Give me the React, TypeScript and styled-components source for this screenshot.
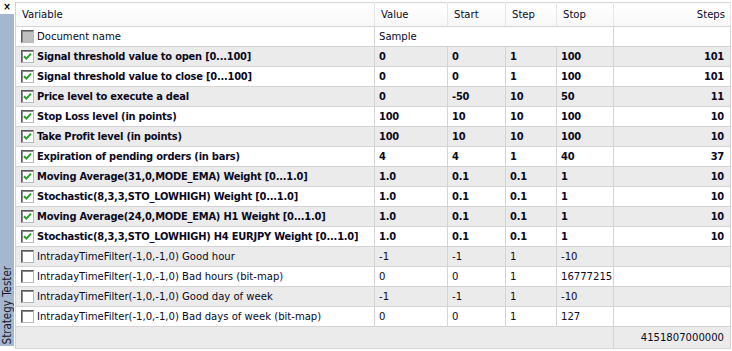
import React from 'react';
import styled, { createGlobalStyle } from 'styled-components';

const GlobalStyle = createGlobalStyle`
  html, body {
    margin: 0;
    padding: 0;
    background: #ffffff;
  }
  body {
    font-family: 'DejaVu Sans Condensed', 'DejaVu Sans', sans-serif;
    font-stretch: condensed;
    font-size: 11.2px;
    color: #000000;
  }
`;

const Colors = {
  SIDEBAR: '#a4b7cf',
  GRID: '#d4d4d4',
  ROW_ALT: '#ebebeb',
  TEXT: '#0a0a1e',
  CHECK: '#21a321',
};

const Frame = styled.div`
  display: flex;
  width: 732px;
  height: 351px;
  overflow: hidden;
  background: #ffffff;
`;

const SideBar = styled.div`
  display: flex;
  flex-direction: column;
  width: 14px;
  padding-bottom: 5px;
`;

const CloseBox = styled.div`
  height: 14px;
  display: flex;
  align-items: center;
  justify-content: center;
  font-weight: bold;
  font-size: 10px;
  line-height: 1;
  color: #000;
`;

const SideStrip = styled.div`
  flex: 1;
  background: ${Colors.SIDEBAR};
  display: flex;
  align-items: flex-end;
  justify-content: center;
`;

const SideLabel = styled.span`
  writing-mode: vertical-rl;
  transform: rotate(180deg);
  font-size: 11.5px;
  color: #1a1a2a;
  padding-top: 2px;
  white-space: nowrap;
`;

const Panel = styled.div`
  margin-left: 1px;
  padding-top: 2px;
  width: 715px;
`;

const Grid = styled.table`
  border-collapse: collapse;
  table-layout: fixed;
  width: 715px;
  border-top: 1px solid ${Colors.GRID};
  border-left: 1px solid ${Colors.GRID};
`;

const HeadCell = styled.th<{ $right?: boolean }>`
  height: 23px;
  padding: 0 ${(p) => (p.$right ? '5px' : '0')} 0 6px;
  text-align: ${(p) => (p.$right ? 'right' : 'left')};
  font-weight: normal;
  color: ${Colors.TEXT};
  border-bottom: 1px solid ${Colors.GRID};
  border-right: 1px solid #e6e6e6;
  background: linear-gradient(#ffffff, #f7f7f7);
  white-space: nowrap;
`;

const Row = styled.tr<{ $alt?: boolean }>`
  background: ${(p) => (p.$alt ? Colors.ROW_ALT : '#ffffff')};
`;

const Cell = styled.td<{ $bold?: boolean; $right?: boolean }>`
  height: 19px;
  padding: 0 ${(p) => (p.$right ? '6px' : '0')} 0 4px;
  text-align: ${(p) => (p.$right ? 'right' : 'left')};
  font-weight: ${(p) => (p.$bold ? 'bold' : 'normal')};
  font-size: ${(p) => (p.$bold ? '11px' : '11.2px')};
  letter-spacing: ${(p) => (p.$bold ? '-0.22px' : '0')};
  color: ${Colors.TEXT};
  border-bottom: 1px solid ${Colors.GRID};
  border-right: 1px solid ${Colors.GRID};
  white-space: nowrap;
  overflow: hidden;
`;

const NameCell = styled(Cell)`
  padding-left: 5px;
`;

const NameWrap = styled.span`
  display: flex;
  align-items: center;
  gap: 3px;
`;

const Box = styled.span<{ $muted?: boolean }>`
  display: inline-flex;
  align-items: center;
  justify-content: center;
  box-sizing: border-box;
  width: 13px;
  height: 13px;
  flex: none;
  background: ${(p) => (p.$muted ? '#c0c0c0' : '#ffffff')};
  border: 1px solid;
  border-color: #5a5a5a #b8b8b8 #b8b8b8 #5a5a5a;
  box-shadow: inset 1px 1px 0 #8a8a8a;
`;

const FootCell = styled.td`
  height: 19px;
  background: ${Colors.ROW_ALT};
  border-right: 1px solid ${Colors.GRID};
  border-bottom: 1px solid ${Colors.GRID};
`;

const FootTotal = styled(FootCell)`
  text-align: right;
  padding-right: 6px;
  color: ${Colors.TEXT};
`;

type Param = {
  name: string;
  checked: boolean;
  value: string;
  start: string;
  step: string;
  stop: string;
  steps?: string;
};

const params: Param[] = [
  { name: 'Signal threshold value to open [0...100]', checked: true, value: '0', start: '0', step: '1', stop: '100', steps: '101' },
  { name: 'Signal threshold value to close [0...100]', checked: true, value: '0', start: '0', step: '1', stop: '100', steps: '101' },
  { name: 'Price level to execute a deal', checked: true, value: '0', start: '-50', step: '10', stop: '50', steps: '11' },
  { name: 'Stop Loss level (in points)', checked: true, value: '100', start: '10', step: '10', stop: '100', steps: '10' },
  { name: 'Take Profit level (in points)', checked: true, value: '100', start: '10', step: '10', stop: '100', steps: '10' },
  { name: 'Expiration of pending orders (in bars)', checked: true, value: '4', start: '4', step: '1', stop: '40', steps: '37' },
  { name: 'Moving Average(31,0,MODE_EMA) Weight [0...1.0]', checked: true, value: '1.0', start: '0.1', step: '0.1', stop: '1', steps: '10' },
  { name: 'Stochastic(8,3,3,STO_LOWHIGH) Weight [0...1.0]', checked: true, value: '1.0', start: '0.1', step: '0.1', stop: '1', steps: '10' },
  { name: 'Moving Average(24,0,MODE_EMA) H1 Weight [0...1.0]', checked: true, value: '1.0', start: '0.1', step: '0.1', stop: '1', steps: '10' },
  { name: 'Stochastic(8,3,3,STO_LOWHIGH) H4 EURJPY Weight [0...1.0]', checked: true, value: '1.0', start: '0.1', step: '0.1', stop: '1', steps: '10' },
  { name: 'IntradayTimeFilter(-1,0,-1,0) Good hour', checked: false, value: '-1', start: '-1', step: '1', stop: '-10' },
  { name: 'IntradayTimeFilter(-1,0,-1,0) Bad hours (bit-map)', checked: false, value: '0', start: '0', step: '1', stop: '16777215' },
  { name: 'IntradayTimeFilter(-1,0,-1,0) Good day of week', checked: false, value: '-1', start: '-1', step: '1', stop: '-10' },
  { name: 'IntradayTimeFilter(-1,0,-1,0) Bad days of week (bit-map)', checked: false, value: '0', start: '0', step: '1', stop: '127' },
];

function CheckMark() {
  return (
    <svg width="9" height="9" viewBox="0 0 9 9">
      <path d="M1 4.2 L3.3 6.6 L8 1.6" fill="none" stroke={Colors.CHECK} strokeWidth="2" />
    </svg>
  );
}

export default function App() {
  return (
    <>
      <GlobalStyle />
      <Frame>
        <SideBar>
          <CloseBox>×</CloseBox>
          <SideStrip>
            <SideLabel>Strategy Tester</SideLabel>
          </SideStrip>
        </SideBar>
        <Panel>
          <Grid>
            <colgroup>
              <col style={{ width: 359 }} />
              <col style={{ width: 73 }} />
              <col style={{ width: 58 }} />
              <col style={{ width: 51 }} />
              <col style={{ width: 57 }} />
              <col style={{ width: 117 }} />
            </colgroup>
            <thead>
              <tr>
                <HeadCell>Variable</HeadCell>
                <HeadCell>Value</HeadCell>
                <HeadCell>Start</HeadCell>
                <HeadCell>Step</HeadCell>
                <HeadCell>Stop</HeadCell>
                <HeadCell $right>Steps</HeadCell>
              </tr>
            </thead>
            <tbody>
              <Row>
                <NameCell>
                  <NameWrap>
                    <Box $muted />
                    Document name
                  </NameWrap>
                </NameCell>
                <Cell colSpan={4}>Sample</Cell>
                <Cell />
              </Row>
              {params.map((p, index) => (
                <Row key={p.name} $alt={index % 2 === 0}>
                  <NameCell $bold={p.checked}>
                    <NameWrap>
                      <Box>{p.checked && <CheckMark />}</Box>
                      {p.name}
                    </NameWrap>
                  </NameCell>
                  <Cell $bold={p.checked}>{p.value}</Cell>
                  <Cell $bold={p.checked}>{p.start}</Cell>
                  <Cell $bold={p.checked}>{p.step}</Cell>
                  <Cell $bold={p.checked}>{p.stop}</Cell>
                  <Cell $bold={p.checked} $right>
                    {p.steps}
                  </Cell>
                </Row>
              ))}
              <tr>
                <FootCell colSpan={5} />
                <FootTotal>4151807000000</FootTotal>
              </tr>
            </tbody>
          </Grid>
        </Panel>
      </Frame>
    </>
  );
}
